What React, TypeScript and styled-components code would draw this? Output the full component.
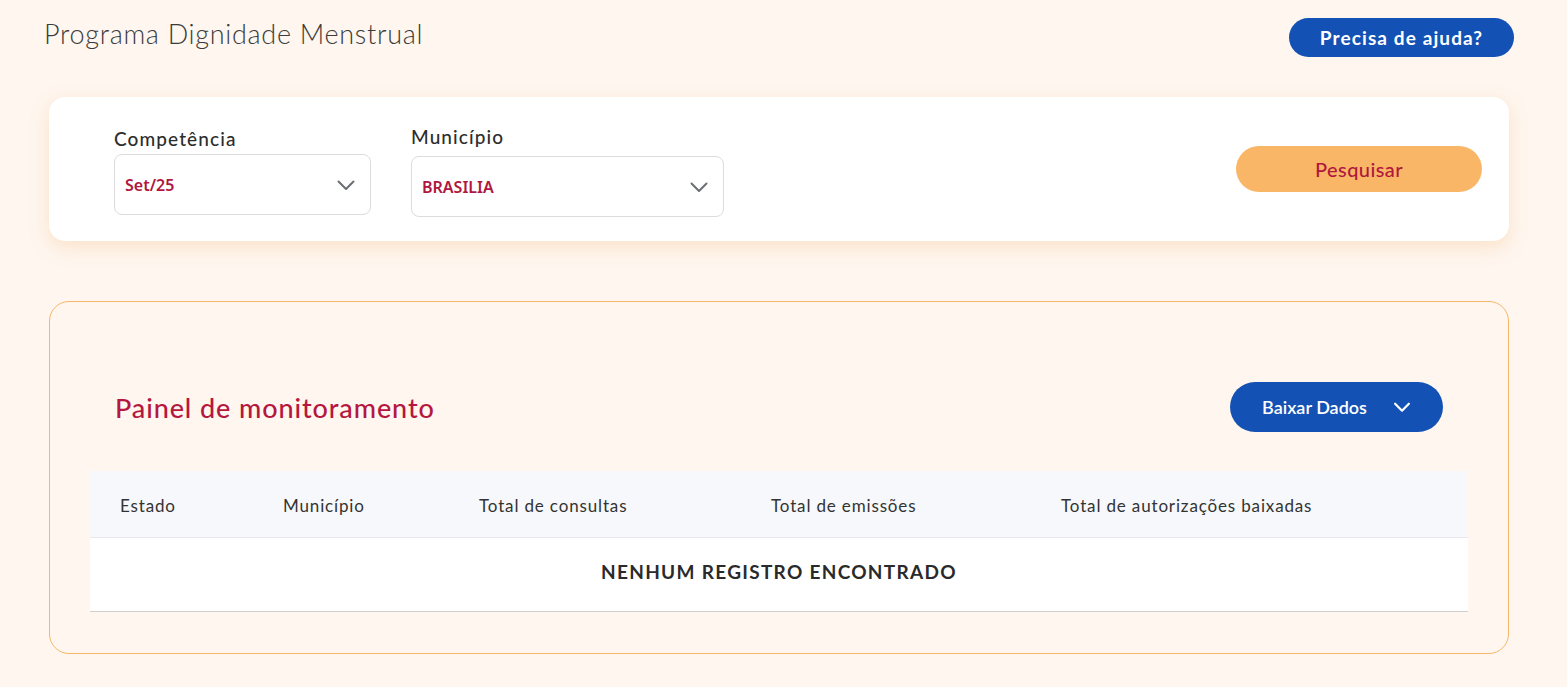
import React from "react";
import styled, { createGlobalStyle } from "styled-components";

const GlobalStyle = createGlobalStyle`
  html, body {
    margin: 0;
    padding: 0;
    background: #fef6ef;
    font-family: "Lato", "Noto Sans", sans-serif;
    color: #333;
  }
`;

const Page = styled.div`
  padding: 0 53px 0 44px;
  box-sizing: border-box;
  width: 1567px;
`;

const TopBar = styled.div`
  display: flex;
  justify-content: space-between;
  align-items: center;
  height: 72px;
`;

const PageTitle = styled.h1`
  margin: 0 0 6px;
  font-size: 27px;
  font-weight: 300;
  color: #3b3b3b;
  letter-spacing: 0.7px;
`;

const PillButton = styled.button<{ $variant?: "blue" | "orange" }>`
  border: none;
  border-radius: 999px;
  cursor: pointer;
  font-family: "Lato", sans-serif;
  display: inline-flex;
  align-items: center;
  justify-content: center;
  gap: 24px;
  background: ${(p) => (p.$variant === "orange" ? "#f9b666" : "#1351b4")};
  color: ${(p) => (p.$variant === "orange" ? "#b0173e" : "#ffffff")};
`;

const HelpButton = styled(PillButton)`
  width: 225px;
  height: 39px;
  font-size: 19px;
  font-weight: 700;
  letter-spacing: 1.1px;
  margin-top: 2px;
`;

const FilterCard = styled.div`
  margin: 25px 5px 0 5px;
  background: #fff;
  border-radius: 16px;
  box-shadow: 0 6px 18px rgba(245, 190, 130, 0.35);
  height: 144px;
  display: flex;
  align-items: flex-start;
  padding: 0 27px 0 65px;
  box-sizing: border-box;
`;

const Field = styled.div<{ $width: number; $top: number }>`
  display: flex;
  flex-direction: column;
  width: ${(p) => p.$width}px;
  margin-top: ${(p) => p.$top}px;
  margin-right: 40px;
`;

const FieldLabel = styled.label`
  font-size: 19px;
  font-weight: 500;
  letter-spacing: 1.1px;
  color: #2d2d2d;
  height: 27px;
  line-height: 27px;
  margin-bottom: 2px;
`;

const SelectBox = styled.div<{ $offset?: number }>`
  height: 59px;
  margin-top: ${(p) => p.$offset ?? 0}px;
  border: 1px solid #dcdcdc;
  border-radius: 8px;
  display: flex;
  align-items: center;
  justify-content: space-between;
  padding: 0 12px 0 10px;
  font-family: "Noto Sans", "Open Sans", sans-serif;
  font-size: 16px;
  font-weight: 600;
  color: #b0173e;
`;

const Spacer = styled.div`
  flex: 1;
`;

const SearchButton = styled(PillButton)`
  width: 246px;
  height: 46px;
  font-size: 20px;
  font-weight: 500;
  letter-spacing: 0.4px;
  margin-top: 49px;
`;

const Panel = styled.div`
  margin: 60px 5px 0 5px;
  border: 1px solid #f6b866;
  border-radius: 20px;
  height: 353px;
  box-sizing: border-box;
  padding: 80px 40px 0;
`;

const PanelHeader = styled.div`
  display: flex;
  justify-content: space-between;
  align-items: center;
  padding: 0 25px;
  height: 50px;
  margin-bottom: 39px;
`;

const PanelTitle = styled.h2`
  margin: 0;
  font-size: 27px;
  font-weight: 500;
  letter-spacing: 0.9px;
  color: #b5173f;
`;

const DownloadButton = styled(PillButton)`
  width: 213px;
  height: 50px;
  font-size: 18px;
  font-weight: 600;
  padding-left: 8px;
`;

const Table = styled.div`
  width: 1378px;
  border-bottom: 1px solid #cfcfcf;
`;

const HeadRow = styled.div`
  display: grid;
  grid-template-columns: 163px 196px 292px 290px 1fr;
  align-items: center;
  height: 66px;
  padding-left: 30px;
  background: #f6f8fb;
  border-bottom: 1px solid #e6e8eb;
`;

const HeadCell = styled.div`
  font-size: 17px;
  letter-spacing: 0.85px;
  color: #333;
  padding-top: 2px;
`;

const EmptyRow = styled.div`
  height: 73px;
  padding-bottom: 6px;
  box-sizing: border-box;
  background: #fff;
  display: flex;
  align-items: center;
  justify-content: center;
  font-size: 19px;
  font-weight: 700;
  letter-spacing: 1.3px;
  color: #2a2a2a;
`;

const Chevron = ({
  color,
  size = 20,
  weight = 2.4,
}: {
  color: string;
  size?: number;
  weight?: number;
}) => (
  <svg width={size} height={size} viewBox="0 0 24 24" fill="none">
    <path
      d="M4.5 8.5l7.5 7.5 7.5-7.5"
      stroke={color}
      strokeWidth={weight}
      strokeLinecap="round"
      strokeLinejoin="round"
    />
  </svg>
);

const columns = [
  "Estado",
  "Município",
  "Total de consultas",
  "Total de emissões",
  "Total de autorizações baixadas",
];

export default function App() {
  return (
    <>
      <GlobalStyle />
      <Page>
        <TopBar>
          <PageTitle>Programa Dignidade Menstrual</PageTitle>
          <HelpButton>Precisa de ajuda?</HelpButton>
        </TopBar>

        <FilterCard>
          <Field $width={257} $top={28}>
            <FieldLabel>Competência</FieldLabel>
            <SelectBox>
              Set/25
              <Chevron color="#6b6f75" size={24} weight={2} />
            </SelectBox>
          </Field>
          <Field $width={313} $top={26}>
            <FieldLabel>Município</FieldLabel>
            <SelectBox $offset={4}>
              BRASILIA
              <Chevron color="#6b6f75" size={24} weight={2} />
            </SelectBox>
          </Field>
          <Spacer />
          <SearchButton $variant="orange">Pesquisar</SearchButton>
        </FilterCard>

        <Panel>
          <PanelHeader>
            <PanelTitle>Painel de monitoramento</PanelTitle>
            <DownloadButton>
              Baixar Dados
              <Chevron color="#ffffff" size={22} />
            </DownloadButton>
          </PanelHeader>
          <Table>
            <HeadRow>
              {columns.map((c) => (
                <HeadCell key={c}>{c}</HeadCell>
              ))}
            </HeadRow>
            <EmptyRow>NENHUM REGISTRO ENCONTRADO</EmptyRow>
          </Table>
        </Panel>
      </Page>
    </>
  );
}
